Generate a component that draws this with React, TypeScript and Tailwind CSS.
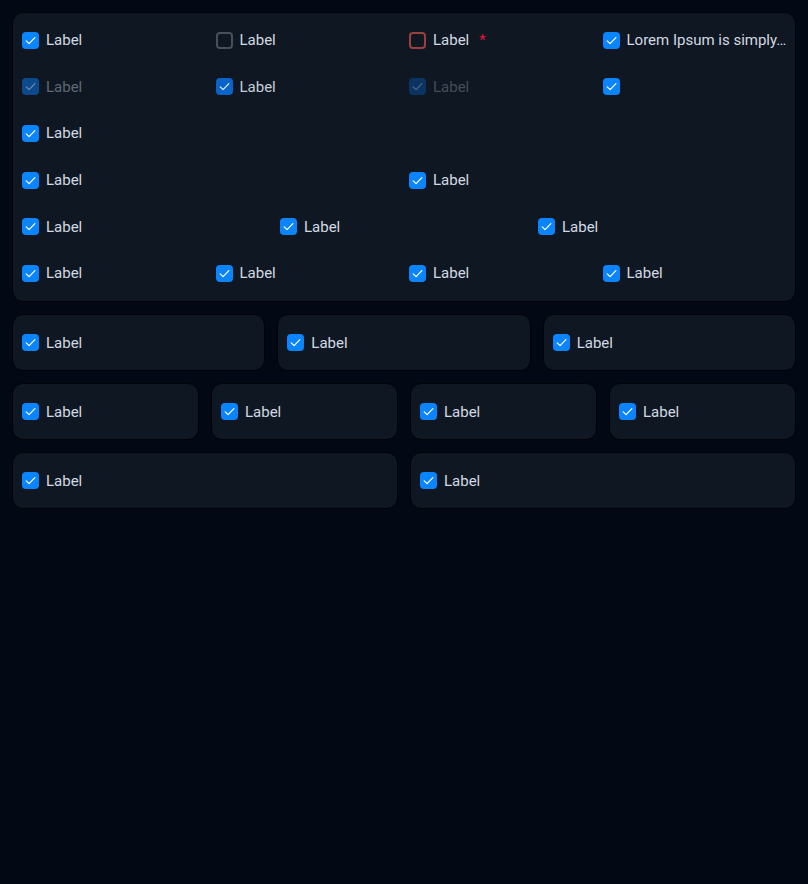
import React from "react";

type Variant = "checked" | "unchecked" | "error" | "disabled" | "pressed" | "disabled2";

const Check = ({ color }: { color: string }) => (
  <svg width="17" height="17" viewBox="0 0 17 17" fill="none">
    <path d="M4.2 8.8 L7.1 11.7 L12.9 5.6" stroke={color} strokeWidth="1.2" strokeLinecap="round" strokeLinejoin="round" />
  </svg>
);

function Box({ v }: { v: Variant }) {
  if (v === "unchecked")
    return <span className="w-[17px] h-[17px] shrink-0 rounded-[4px] border-2 border-[#4a505b] box-border" />;
  if (v === "error")
    return <span className="w-[17px] h-[17px] shrink-0 rounded-[4px] border-2 border-[#9b403d] box-border" />;
  if (v === "disabled")
    return (
      <span className="w-[17px] h-[17px] shrink-0 rounded-[4px] bg-[#0d4a8c] flex">
        <Check color="#6d8bb0" />
      </span>
    );
  if (v === "disabled2")
    return (
      <span className="w-[17px] h-[17px] shrink-0 rounded-[4px] bg-[#0b3462] flex">
        <Check color="#4d6688" />
      </span>
    );
  if (v === "pressed")
    return (
      <span className="w-[17px] h-[17px] shrink-0 rounded-[4px] bg-[#0a63c8] flex">
        <Check color="#e6eefa" />
      </span>
    );
  return (
    <span className="w-[17px] h-[17px] shrink-0 rounded-[4px] bg-[#0a84ff] flex">
      <Check color="#ffffff" />
    </span>
  );
}

function Item({
  v = "checked",
  label = "Label",
  labelClass = "text-[#d3d9e2]",
  required = false,
}: {
  v?: Variant;
  label?: string | null;
  labelClass?: string;
  required?: boolean;
}) {
  return (
    <div className="flex items-center min-w-0 pl-[5px]">
      <Box v={v} />
      {label !== null && (
        <span className={`ml-[7px] text-[15px] leading-[20px] whitespace-nowrap ${labelClass}`}>{label}</span>
      )}
      {required && <span className="ml-[10px] text-[15px] leading-[20px] text-[#e5163f]">*</span>}
    </div>
  );
}

function Row({ cols, children }: { cols: string; children: React.ReactNode }) {
  return <div className={`grid ${cols} h-[46.6px] items-center`}>{children}</div>;
}

function SmallCard() {
  return (
    <div className="h-[57px] rounded-[11px] border border-[#010308] bg-[#0f1722] flex items-center px-[4px]">
      <Item />
    </div>
  );
}

export default function App() {
  return (
    <div
      className="min-h-[884px] w-full bg-[#030914] p-3 flex flex-col gap-3"
      style={{ fontFamily: "Roboto, 'Noto Sans', sans-serif" }}
    >
      <div className="h-[290px] rounded-[11px] border border-[#010308] bg-[#0f1722] px-[4px] pt-[4px]">
        <Row cols="grid-cols-4">
          <Item />
          <Item v="unchecked" />
          <Item v="error" required />
          <Item label="Lorem Ipsum is simply…" />
        </Row>
        <Row cols="grid-cols-4">
          <Item v="disabled" labelClass="text-[#5f6874]" />
          <Item v="pressed" labelClass="text-[#c6cdd7]" />
          <Item v="disabled2" labelClass="text-[#444d59]" />
          <Item label={null} />
        </Row>
        <Row cols="grid-cols-4">
          <Item />
        </Row>
        <Row cols="grid-cols-2">
          <Item />
          <Item />
        </Row>
        <Row cols="grid-cols-3">
          <Item />
          <Item />
          <Item />
        </Row>
        <Row cols="grid-cols-4">
          <Item />
          <Item />
          <Item />
          <Item />
        </Row>
      </div>
      <div className="grid grid-cols-3 gap-3">
        <SmallCard />
        <SmallCard />
        <SmallCard />
      </div>
      <div className="grid grid-cols-4 gap-3">
        <SmallCard />
        <SmallCard />
        <SmallCard />
        <SmallCard />
      </div>
      <div className="grid grid-cols-2 gap-3">
        <SmallCard />
        <SmallCard />
      </div>
    </div>
  );
}
